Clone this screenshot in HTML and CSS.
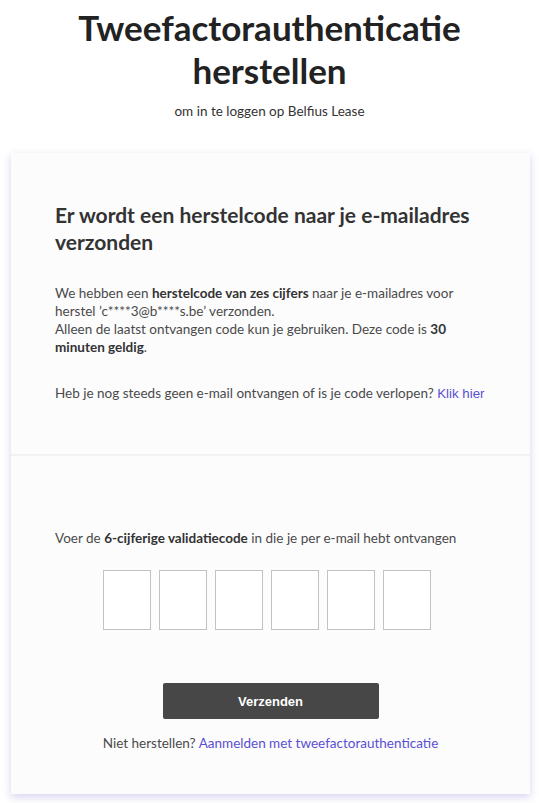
FILE: index.html
```html
<!DOCTYPE html>
<html lang="nl">
<head>
<meta charset="utf-8">
<title>Tweefactorauthenticatie herstellen</title>
<link rel="stylesheet" href="styles.css">
</head>
<body>
<header class="page-head">
  <h1 class="title">Tweefactorauthenticatie herstellen</h1>
  <p class="subtitle">om in te loggen op Belfius Lease</p>
</header>
<main class="card">
  <section class="section info">
    <h2 class="heading">Er wordt een herstelcode naar je e-mailadres verzonden</h2>
    <p class="text">We hebben een <strong>herstelcode van zes cijfers</strong> naar je e-mailadres voor herstel ’c****3@b****s.be’ verzonden.<br>Alleen de laatst ontvangen code kun je gebruiken. Deze code is <strong>30 minuten geldig</strong>.</p>
    <p class="text resend">Heb je nog steeds geen e-mail ontvangen of is je code verlopen? <a href="#" class="klik">Klik hier</a></p>
  </section>
  <section class="section entry">
    <p class="text prompt">Voer de <strong>6-cijferige validatiecode</strong> in die je per e-mail hebt ontvangen</p>
    <div class="code">
      <input class="digit" type="text" maxlength="1" aria-label="cijfer 1">
      <input class="digit" type="text" maxlength="1" aria-label="cijfer 2">
      <input class="digit" type="text" maxlength="1" aria-label="cijfer 3">
      <input class="digit" type="text" maxlength="1" aria-label="cijfer 4">
      <input class="digit" type="text" maxlength="1" aria-label="cijfer 5">
      <input class="digit" type="text" maxlength="1" aria-label="cijfer 6">
    </div>
    <button class="submit" type="button">Verzenden</button>
    <p class="text alt">Niet herstellen? <a href="#" class="link">Aanmelden met tweefactorauthenticatie</a></p>
  </section>
</main>
</body>
</html>
```
FILE: styles.css
```css
* { box-sizing: border-box; }
html, body { margin: 0; padding: 0; background: #ffffff; }
body {
  font-family: Lato, "Open Sans", sans-serif;
  color: #444;
  padding-top: 6px;
}
.page-head { text-align: center; }
.title {
  margin: 0 auto;
  width: 420px;
  font-size: 35px;
  line-height: 43px;
  font-weight: 700;
  color: #222;
}
.subtitle {
  margin: 9px 0 0;
  font-size: 13.5px;
  line-height: 20px;
  color: #333;
}
.card {
  margin: 32px 9px 10px 11px;
  width: 519px;
  background: #fcfcfd;
  box-shadow: 0 3px 8px rgba(90, 80, 190, 0.25);
}
.section { padding: 48px 44px 51px; }
.info { border-bottom: 2px solid #f2f2f5; }
.heading {
  margin: 0 0 29px;
  font-size: 21px;
  line-height: 27px;
  font-weight: 700;
  color: #333;
}
.text {
  margin: 0;
  font-size: 13.5px;
  line-height: 18px;
  color: #4a4a4a;
}
.text strong { color: #333; font-weight: 700; }
.resend { margin-top: 28px; white-space: nowrap; }
.klik {
  color: #5a4fd3;
  text-decoration: none;
  font-family: "Liberation Sans", Arial, sans-serif;
  font-size: 13.3px;
}
.entry { padding: 73px 44px 42px; display: flex; flex-direction: column; align-items: center; }
.prompt { align-self: stretch; }
.code {
  margin-top: 23px;
  display: flex;
  gap: 8px;
  padding-right: 8px;
}
.digit {
  width: 48px;
  height: 60px;
  border: 1px solid #c2c2c2;
  background: #fff;
  border-radius: 0;
  padding: 0;
  margin: 0;
  font-size: 24px;
  text-align: center;
}
.submit {
  margin-top: 53px;
  width: 216px;
  height: 36px;
  border: none;
  border-radius: 2px;
  background: #474747;
  color: #fff;
  font-family: "Liberation Sans", Arial, sans-serif;
  font-weight: 700;
  font-size: 13px;
  padding: 0;
}
.alt { margin-top: 15px; text-align: center; }
.link { color: #5a4fd3; text-decoration: none; }
```
